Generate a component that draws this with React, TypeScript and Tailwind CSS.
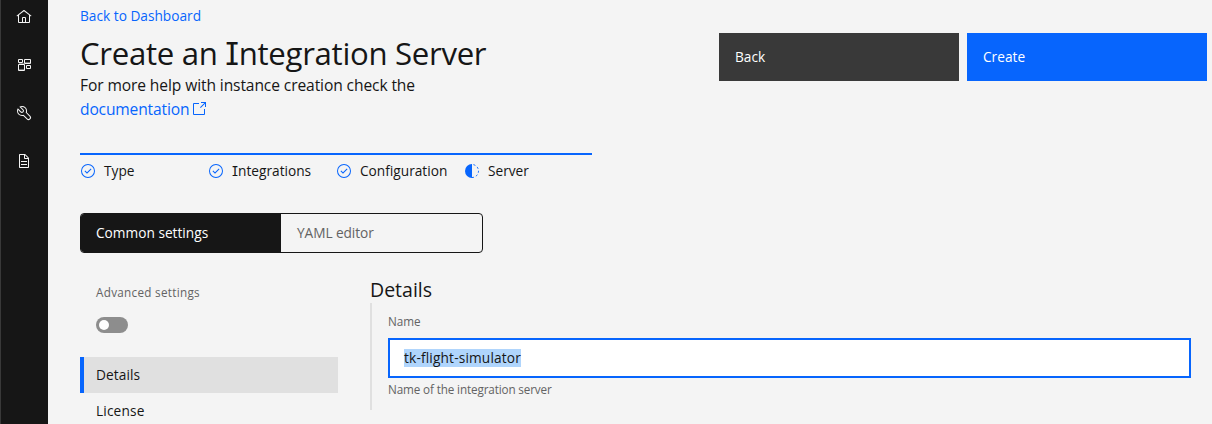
import React from "react";

const CHECK = "M14 21.414 9 16.413 10.413 15 14 18.586 21.585 11 23 12.415zM16 2A14 14 0 1 0 30 16 14 14 0 0 0 16 2Zm0 26A12 12 0 1 1 28 16 12 12 0 0 1 16 28Z";
const HOME = "M16.6123,2.2138a1.01,1.01,0,0,0-1.2427,0L1,13.4194l1.2427,1.5717L4,13.6208V26a2.0041,2.0041,0,0,0,2,2H26a2.0037,2.0037,0,0,0,2-2V13.63L29.7573,15,31,13.4282ZM18,26H14V18h4Zm2,0V18a2.0023,2.0023,0,0,0-2-2H14a2.002,2.002,0,0,0-2,2v8H6V12.0615l10-7.79,10,7.8005V26Z";
const TOOLS = "M12.1,2A9.8,9.8,0,0,0,6.7,3.6L13.1,10a2.1,2.1,0,0,1,.2,3,2.1,2.1,0,0,1-3-.2L3.7,6.4A9.84,9.84,0,0,0,2,12.1,10.14,10.14,0,0,0,12.1,22.2a10.9,10.9,0,0,0,2.6-.3l6.7,6.7a5,5,0,0,0,7.1-7.1l-6.7-6.7a10.9,10.9,0,0,0,.3-2.6A10,10,0,0,0,12.1,2Zm8,10.1a7.61,7.61,0,0,1-.3,2.1l-.3,1.1.8.8,6.7,6.7a2.88,2.88,0,0,1,.9,2.1A2.72,2.72,0,0,1,27,27a2.9,2.9,0,0,1-4.2,0l-6.7-6.7-.8-.8-1.1.3a7.61,7.61,0,0,1-2.1.3,8.27,8.27,0,0,1-5.7-2.3A7.63,7.63,0,0,1,4,12.1a8.33,8.33,0,0,1,.3-2.2l4.4,4.4a4.14,4.14,0,0,0,5.9.2,4.14,4.14,0,0,0-.2-5.9L10,4.2a6.45,6.45,0,0,1,2-.3,8.27,8.27,0,0,1,5.7,2.3A8.49,8.49,0,0,1,20.1,12.1Z";
const DOCUMENT = "M25.7,9.3l-7-7C18.5,2.1,18.3,2,18,2H8C6.9,2,6,2.9,6,4v24c0,1.1,0.9,2,2,2h16c1.1,0,2-0.9,2-2V10C26,9.7,25.9,9.5,25.7,9.3zM18,4.4l5.6,5.6H18V4.4zM24,28H8V4h8v6c0,1.1,0.9,2,2,2h6V28zM10 22h12v2H10zM10 16h12v2H10z";
const LAUNCH = "M26,28H6a2.0027,2.0027,0,0,1-2-2V6A2.0027,2.0027,0,0,1,6,4H16V6H6V26H26V16h2V26A2.0027,2.0027,0,0,1,26,28ZM20 2 20 4 26.586 4 18 12.586 19.414 14 28 5.414 28 12 30 12 30 2z";

function Icon({ d }: { d: string }) {
  return (
    <svg viewBox="0 0 32 32" className="size-4 shrink-0 fill-current" aria-hidden="true">
      <path fillRule="evenodd" d={d} />
    </svg>
  );
}

function AppsIcon() {
  return (
    <svg viewBox="0 0 16 16" className="size-4" fill="none" stroke="currentColor" aria-hidden="true">
      <path d="M2.5 2.5h4v3h-4zM2.5 7.5h6v6h-6zM8.5 2.5h6v4h-6zM10.5 8.5h4v3h-4z" />
      <path d="M3 6.5h5M9 5.5h5M3 12.5h5" strokeOpacity="0.4" />
    </svg>
  );
}

function HalfIcon() {
  return (
    <svg viewBox="0 0 16 16" className="size-4 shrink-0" aria-hidden="true">
      <path d="M8 1a7 7 0 0 0 0 14z" fill="currentColor" />
      <path d="M8 1.5a6.5 6.5 0 0 1 0 13" fill="none" stroke="currentColor" strokeDasharray="2 2.1" strokeDashoffset="-1.5" />
    </svg>
  );
}

function SerifI() {
  return <span className="font-['Inter'] [font-feature-settings:'cv08','ss02']">I</span>;
}

function Step({ icon, children }: { icon: React.ReactNode; children: React.ReactNode }) {
  return (
    <li className="flex w-32 items-center gap-2">
      <span className="text-[#0765fd]">{icon}</span>
      <span className="leading-[18px]">{children}</span>
    </li>
  );
}

export default function App() {
  return (
    <div className="flex h-[424px] w-[1212px] overflow-hidden whitespace-nowrap bg-[#f4f4f4] font-['Open_Sans','Noto_Sans',sans-serif] text-[13.7px] text-[#161616] [font-stretch:90%]">
      <nav className="flex w-12 shrink-0 flex-col items-center gap-8 border-l border-[#393939] bg-[#161616] pr-px pt-[9px] text-[#f4f4f4]">
        <Icon d={HOME} />
        <AppsIcon />
        <Icon d={TOOLS} />
        <Icon d={DOCUMENT} />
      </nav>
      <main className="flex-1 pl-8">
        <header className="flex h-[153px] justify-between pr-[5px]">
          <div className="pt-[7px]">
            <a className="block leading-[18px] text-[#0765fd]">Back to Dashboard</a>
            <h1 className="-mb-px mt-2 text-[31.2px] leading-10 tracking-[-0.32px]">
              Create an <SerifI />ntegration Server
            </h1>
            <p className="text-[15.6px] leading-6 tracking-[-0.11px]">For more help with instance creation check the</p>
            <a className="flex items-center gap-0.5 text-[15.6px] leading-6 tracking-[-0.16px] text-[#0765fd]">
              documentation <Icon d={LAUNCH} />
            </a>
          </div>
          <div className="flex gap-2 pt-[33px] text-white">
            <button className="h-12 w-60 bg-[#393939] pl-4 text-left">Back</button>
            <button className="h-12 w-60 bg-[#0765fd] pl-4 text-left">Create</button>
          </div>
        </header>
        <ol className="flex h-[60px] w-[512px] items-start border-t-2 border-[#0765fd] pt-[7px]">
          <Step icon={<Icon d={CHECK} />}>Type</Step>
          <Step icon={<Icon d={CHECK} />}><SerifI />ntegrations</Step>
          <Step icon={<Icon d={CHECK} />}>Configuration</Step>
          <Step icon={<HalfIcon />}>Server</Step>
        </ol>
        <div className="flex h-10 w-[403px] overflow-hidden rounded border border-[#161616]">
          <button className="w-[200px] bg-[#161616] pl-[15px] text-left text-white">Common settings</button>
          <button className="flex-1 pl-4 text-left tracking-[-0.08px] text-[#636363]">YAML editor</button>
        </div>
        <div className="flex">
          <aside className="w-[258px] pt-[31px]">
            <div className="pl-4 text-[11.7px] leading-4 tracking-[0.3px] text-[#636363]">Advanced settings</div>
            <div className="ml-4 mt-[17px] flex h-4 w-8 items-center rounded-full bg-[#8d8d8d] pl-[3px]">
              <span className="size-2.5 rounded-full bg-white" />
            </div>
            <div className="mt-6 flex h-9 items-center border-l-4 border-[#0765fd] bg-[#e0e0e0] pl-3 tracking-[0.1px]">Details</div>
            <div className="flex h-9 items-center pl-4 tracking-[0.15px]">License</div>
          </aside>
          <section className="ml-8 w-[821px] pt-6">
            <h2 className="text-[19.5px] leading-[26px]">Details</h2>
            <div className="h-[107px] border-l-2 border-[#e0e0e0] pl-4 pt-2.5 text-[11.7px] leading-4 text-[#636363]">
              <div>Name</div>
              <div className="mt-[9px] flex h-10 items-center border-2 border-[#0765fd] bg-white pl-3.5 text-[13.7px] leading-[18px] tracking-[0.16px] text-[#161616]">
                <span className="bg-[#b0d5fc]">tk-flight-simulator</span>
              </div>
              <div className="mt-[3px] tracking-[-0.13px]">Name of the integration server</div>
            </div>
          </section>
        </div>
      </main>
    </div>
  );
}
